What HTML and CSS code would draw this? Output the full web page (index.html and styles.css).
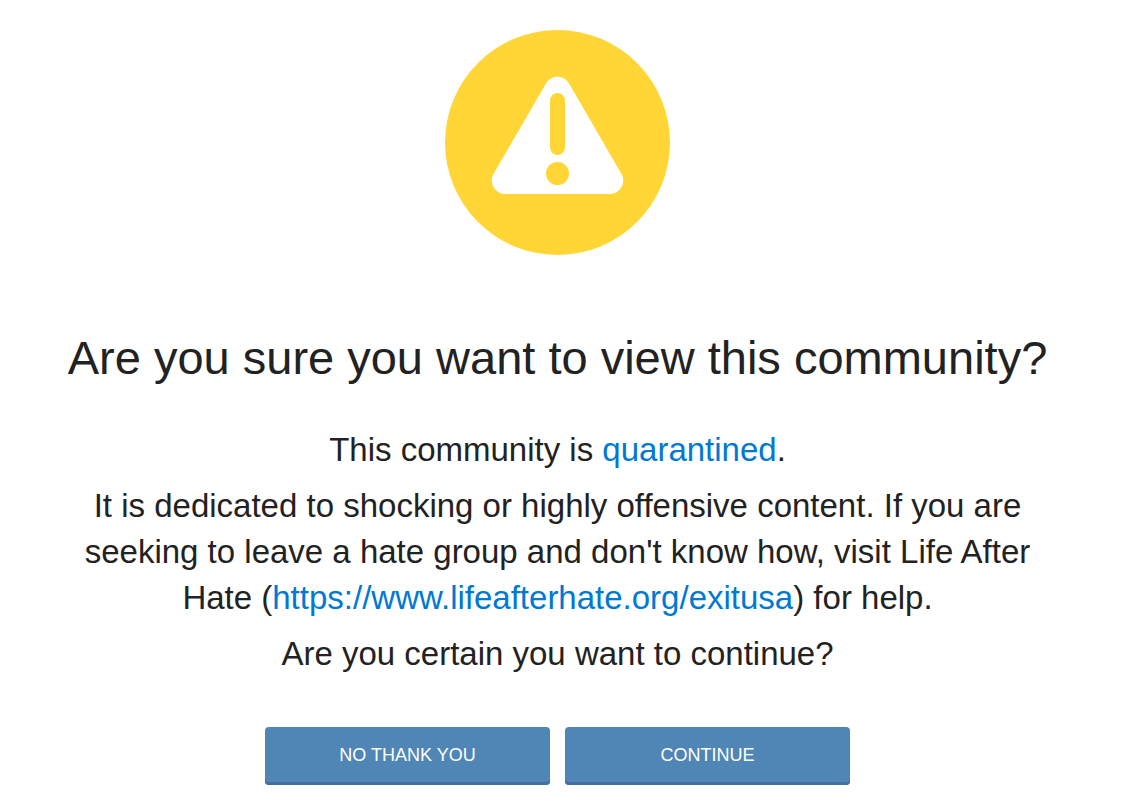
FILE: index.html
```
<!DOCTYPE html>
<html lang="en">
<head>
  <meta charset="UTF-8">
  <meta name="viewport" content="width=device-width, initial-scale=1.0">
  <title>Are you sure you want to view this community?</title>
  <link rel="stylesheet" href="styles.css">
</head>
<body>

  <main class="interstitial">
    <!-- Warning badge -->
    <svg class="warning-icon" viewBox="0 0 225 225" aria-hidden="true">
      <circle cx="112.5" cy="112.5" r="112.5" fill="#ffd635"/>
      <path d="M101 53.500 C106 44.500 119 44.500 124 53.500 L176.500 144 C181.500 153 175 164 165 164 H60 C50 164 43.500 153 48.500 144 Z" fill="#fff"/>
      <rect x="105" y="63" width="15" height="62" rx="7.500" fill="#ffd635"/>
      <circle cx="112.500" cy="143.500" r="11.500" fill="#ffd635"/>
    </svg>

    <h1>Are you sure you want to view this community?</h1>

    <div class="message">
      <p>This community is <a href="#">quarantined</a>.</p>
      <p>It is dedicated to shocking or highly offensive content. If you are seeking to leave a hate group and don't know how, visit Life After Hate (<a href="https://www.lifeafterhate.org/exitusa">https://www.lifeafterhate.org/exitusa</a>) for help.</p>
      <p>Are you certain you want to continue?</p>
    </div>

    <form class="buttons">
      <button type="button">No thank you</button>
      <button type="button">Continue</button>
    </form>
  </main>

</body>
</html>
```
FILE: styles.css
```
* {
  box-sizing: border-box;
}
body {
  margin: 0;
  background-color: #fff;
  color: #222;
  font-family: Arial, "Liberation Sans", sans-serif;
}
.interstitial {
  max-width: 1115px;
  padding: 30px 60px 0;
  text-align: center;
}
.warning-icon {
  display: block;
  width: 225px;
  height: 225px;
  margin: 0 auto;
}
h1 {
  margin: 75px 0 0;
  font-size: 47px;
  font-weight: normal;
  line-height: 56px;
}
.message {
  margin-top: 41px;
  font-size: 33px;
  line-height: 46px;
}
.message p {
  margin: 0 0 10px;
}
a {
  color: #0079d3;
  text-decoration: none;
}
.buttons {
  display: flex;
  justify-content: center;
  gap: 15px;
  margin-top: 50px;
}
button {
  width: 285px;
  height: 58px;
  padding: 0 0 2px;
  border: none;
  border-radius: 4px;
  background-color: #4f86b5;
  box-shadow: inset 0 -3px #4270a2;
  color: #fff;
  font-family: inherit;
  font-size: 18px;
  text-transform: uppercase;
  cursor: pointer;
}
```
